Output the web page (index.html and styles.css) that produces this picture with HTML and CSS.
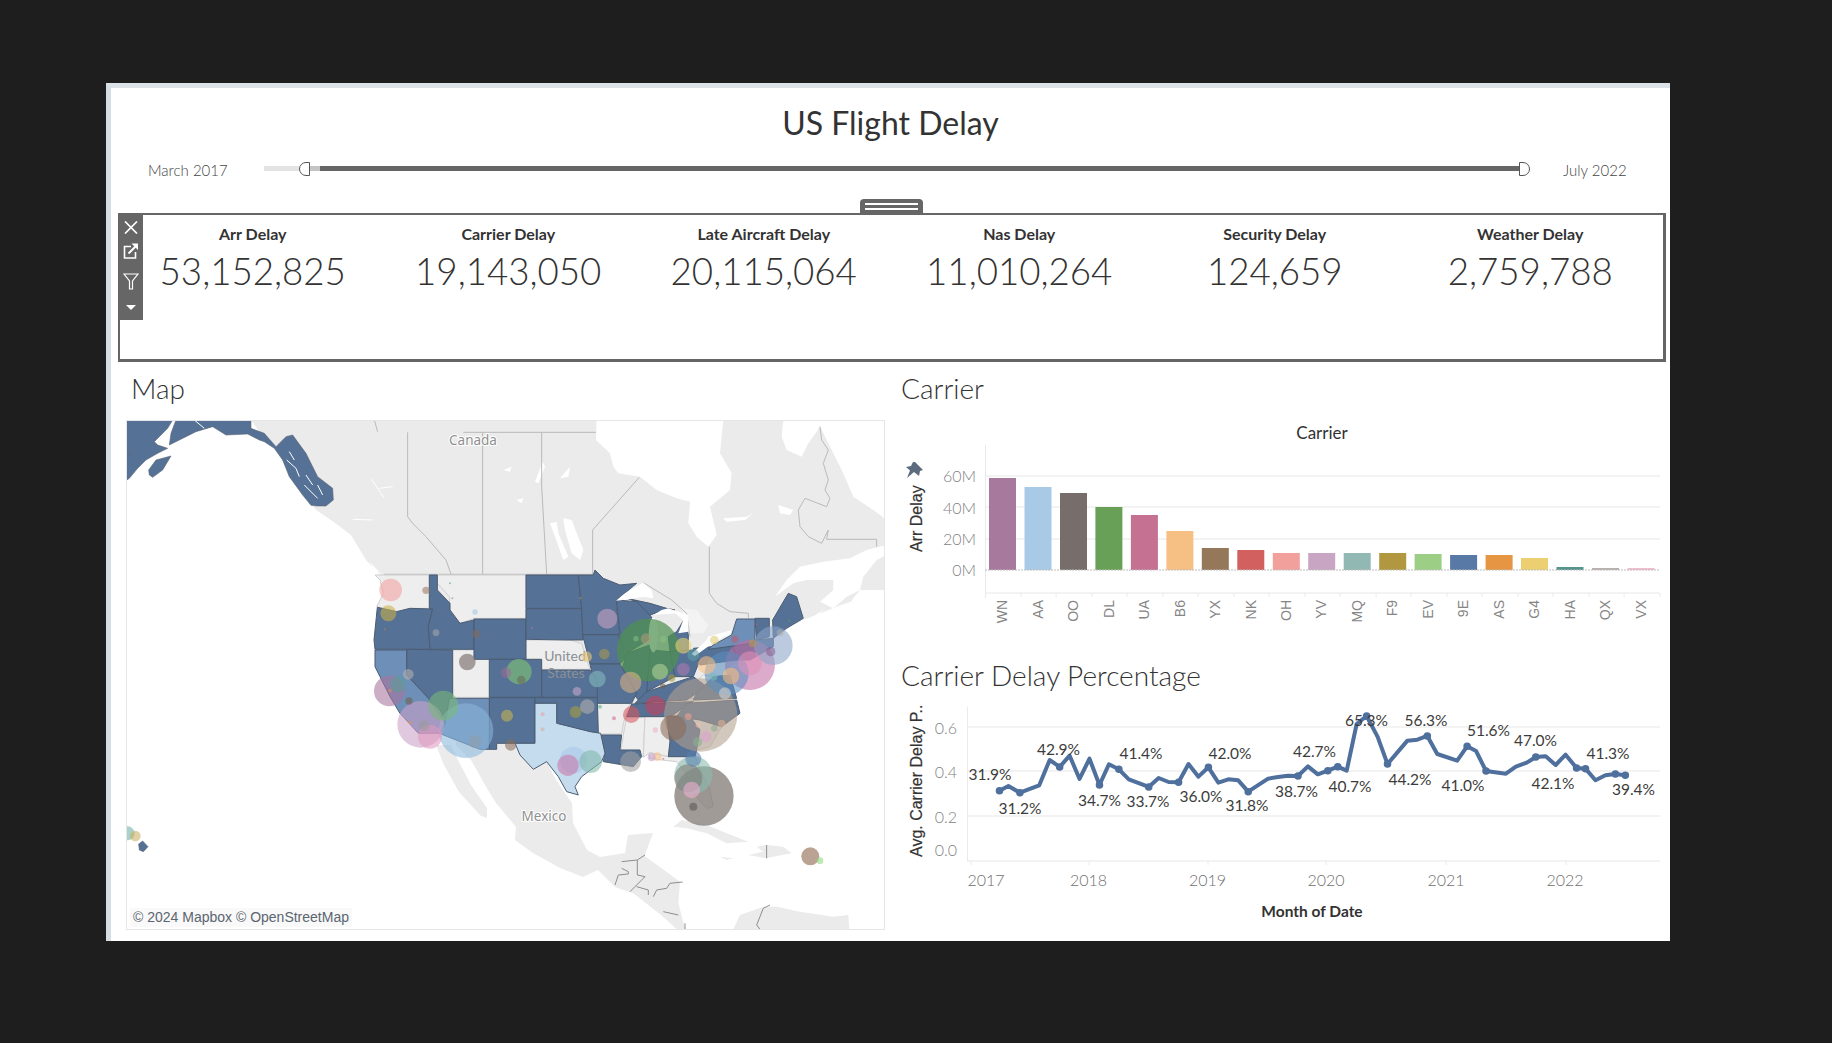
FILE: index.html
```html
<!DOCTYPE html>
<html lang="en">
<head>
<meta charset="utf-8">
<title>US Flight Delay</title>
<link rel="stylesheet" href="styles.css">
</head>
<body>
<main class="dash">
  <h1 class="title">US Flight Delay</h1>
  <div class="range">
    <span class="range-label">March 2017</span>
    <div class="track">
      <span class="track-off"></span>
      <span class="handle handle-l"></span>
      <span class="track-fade"></span>
      <span class="track-on"></span>
      <span class="handle handle-r"></span>
    </div>
    <span class="range-end">July 2022</span>
  </div>

  <section class="kpi-box">
    <div class="grip"><i></i><i></i></div>
    <div class="tools">
      <svg class="tool" width="14" height="13" viewBox="0 0 14 13"><path d="M1 .5 13 12.500M13 .5 1 12.500" fill="none" stroke="#fff" stroke-width="1.700"/></svg>
      <svg class="tool" width="16" height="16" viewBox="0 0 16 16"><path d="M8 3.500H1.500V15H12.500V9" fill="none" stroke="#fff" stroke-width="1.600"/><path d="M5.500 10.500 13 3" fill="none" stroke="#fff" stroke-width="2"/><path d="M8.500 .5H15V7Z" fill="#fff"/></svg>
      <svg class="tool" width="16" height="17" viewBox="0 0 16 17"><path d="M1 1H15L9.500 8V16H6.500V8Z" fill="none" stroke="#fff" stroke-width="1.200"/></svg>
      <svg class="tool" width="10" height="5" viewBox="0 0 10 5"><path d="M0 0H10L5 5Z" fill="#fff"/></svg>
    </div>
    <div class="kpis">
      <div class="kpi"><h3>Arr Delay</h3><p>53,152,825</p></div>
      <div class="kpi"><h3>Carrier Delay</h3><p>19,143,050</p></div>
      <div class="kpi"><h3>Late Aircraft Delay</h3><p>20,115,064</p></div>
      <div class="kpi"><h3>Nas Delay</h3><p>11,010,264</p></div>
      <div class="kpi"><h3>Security Delay</h3><p>124,659</p></div>
      <div class="kpi"><h3>Weather Delay</h3><p>2,759,788</p></div>
    </div>
  </section>

  <div class="panels">
    <section class="left">
      <h2 class="h-map">Map</h2>
      <div class="map">
        <svg class="map-svg" width="757" height="508" viewBox="1 1 757 508">
          <g class="base">
            <path class="land" d="M125 0H760V170L715 185L690 195L660 208L600 250L560 300L500 315L330 300L258 160L254 155L240 140L225 115L205 100L190 90L170 62L150 30L135 14Z"/>
            <path class="land" d="M330 325 345 340 362 370 370 383 390 407 389 420 407 433 434 448 457 457 472 450 489 467 507 473 524 483 537 497 559 509 552 483 551 467 554 462 521 456 512 460 517 440 527 413 502 415 499 433 474 437 461 430 447 403 446 383 430 360 400 300 330 300Z"/>
            <path class="land" d="M310 325 318 345 333 372 355 396 361 398 361 388 345 365 332 340 325 325Z"/>
            <g transform="translate(374 370) scale(.3333)">
              <path class="land" d="M520 110 545 90 620 105 680 130 745 155 680 160 620 130 560 115ZM770 170 800 165 850 170 875 190 820 200 800 205 745 195 790 185ZM660 200 700 205 680 210ZM345 290 365 215 412 210 430 195 540 275 535 340 555 418 700 418 720 375 790 350 830 350 900 365 1000 380 1045 375 1048 418H530L490 380 400 310Z"/>
            </g>
            <g transform="translate(374 0) scale(.3333)">
              <path class="water" d="M290 0 288 60 330 100 340 140 355 160 420 170 470 210 530 235 570 245 565 310 590 350 625 380 650 345 630 260 690 210 695 160 660 100 670 0ZM850 0 845 50 860 90 905 110 925 70 950 35 960 18 985 70 1030 160 1060 230 1120 270 1153 295 1160 290V0Z"/>
              <path class="water" d="M1160 375 1100 390 1050 415 970 425 900 440 860 480 825 530 880 490 920 480 1000 480 1000 510 960 545 1000 565 1040 530 1080 510 1090 470 1130 420 1160 405ZM1160 510 1080 510 1060 535 1040 570 970 625 930 640 930 610 975 565 940 590 905 600 880 640 800 720H1160Z"/>
              <path class="water" d="M670 295 740 290 760 280 735 300 680 305ZM835 255 880 270 870 285 840 280ZM190 295 215 300 250 390 240 420 215 400 195 330ZM150 310 170 305 175 340 205 410 190 420 165 350ZM105 185 128 125 135 140 115 190ZM10 150 35 140 30 155ZM180 175 210 140 205 170ZM50 240 70 235 65 250Z"/>
              <path class="pale" d="M540 565 590 570 625 615 610 640 570 640 565 600Z"/>
            </g>
            <g transform="scale(.3333)">
              <path class="water" d="M550 280 575 280 600 350 570 320ZM730 425 770 465 745 450Z"/>
              <path class="water-thin" d="M735 175 775 235M760 205 800 200M680 298 740 300"/>
            </g>
          </g>
          <g transform="translate(374 370) scale(.3333)">
            <path class="border-d" d="M365 215 412 210 435 195M365 235 385 245 385 252 355 255 345 285M412 210V255L435 260 390 305M410 290 445 300V315M460 320 470 300 500 295 510 280 548 276M490 365 535 375M555 400V418M800 165V205M810 345 790 355 770 405 780 418"/>
          </g>
          <g transform="translate(374 0) scale(.3333)">
            <path class="border" d="M-110 37H288M125 37 125 200 140 462M278 462V330L418 172M628 380V520L650 550 690 575 745 580V595M960 20 965 60 985 90 970 130 985 180 975 210 990 235 980 260 915 235 895 270 900 320 925 350 965 370 985 330 980 358H1130V380M-348 463H280M430 488 515 540 560 580 570 650"/>
          </g>
          <g transform="scale(.3333)">
            <path class="border" d="M845 37V290L860 310 900 350 960 420 975 462M1070 37V462M745 0 755 35"/>
            <path class="alaska" d="M0 0H140L125 25 105 45 85 65 95 75 125 85 95 100 60 120 35 145 10 175 0 182V92L15 100 0 115ZM150 0H375V25L415 40 450 80 480 50 500 45 540 100 575 170 620 205 622 240 600 258 575 258 555 256 530 225 490 170 470 120 445 85 415 65 400 60 365 42 300 45 260 20 210 35 130 75 135 40ZM68 150 90 120 135 108 110 150 80 172 70 165Z"/>
            <path class="water-thin" d="M490 95 505 120M482 120 510 145 520 170M540 165 560 195M535 195 575 235M575 195 590 225M205 0 235 25"/>
          </g>
          <g class="usa" transform="translate(234 140) scale(.3333)">
            <g class="st st-off">
              <path d="M45 45H208V145H150L110 155 50 140 70 100 60 60Z"/>
              <path d="M232 45H498V175H342L300 190 270 150 268 110 232 70Z"/>
              <path d="M498 240H630L665 250 690 328H545V298H498Z"/>
              <path d="M278 270H342V298H388V412H278Z"/>
              <path d="M712 430H810L790 490 785 522H722L715 520Z"/>
              <path d="M800 472H855L850 590 790 580 783 572 790 525Z"/>
              <path d="M855 470H920L930 545 925 590 870 578 850 592Z"/>
              <path d="M868 578 925 590H1005L1050 690 1060 740 1040 745 1000 700 980 640 950 605 905 600 868 595Z"/>
              <path d="M960 470 1020 480 1085 500 1050 560 1010 570 960 490Z"/>
              <path d="M990 380 1030 345 1060 350 1050 390 1020 415 985 415Z"/>
              <path d="M1130 250 1180 240 1170 300 1130 300Z"/>
            </g>
            <g class="st">
              <path d="M52 142 110 155 150 145 218 147 205 200 210 268H45L42 240Z"/>
              <path d="M208 45H232V90L270 130V150L300 190 342 180V268H210L205 200 218 147 208 145Z"/>
              <path d="M342 177H498V298H342Z"/>
              <path d="M498 45H655L665 145H498Z"/>
              <path d="M498 146H665L670 240H625L498 238Z"/>
              <path d="M655 45H700L705 30 730 55 780 75 830 70 770 120 770 140 780 224H668L665 146Z"/>
              <path d="M668 224H775L800 290 780 312H690Z"/>
              <path d="M770 120 830 125 870 165 880 180 865 240 800 280 775 224 780 220Z"/>
              <path d="M800 115 870 130 920 145 945 150 900 155 870 165 830 125Z"/>
              <path d="M950 215 975 175 985 225 985 270 930 275 925 230Z"/>
              <path d="M800 280 870 255 880 340 860 400 835 420 780 350Z"/>
              <path d="M870 270 930 275 945 350 860 395Z"/>
              <path d="M930 275 1000 270 1020 300 1000 350 945 350Z"/>
              <path d="M860 395 1000 350 1040 380 980 420 825 430Z"/>
              <path d="M815 432 1000 425 930 470 800 470Z"/>
              <path d="M690 312H780L830 400 815 430H712V410Z"/>
              <path d="M545 330H690L712 360V412H545Z"/>
              <path d="M388 298H545V412H388Z"/>
              <path d="M140 268 278 270V412L268 415 255 490 205 415 140 345Z"/>
              <path d="M388 413H525V550H410V568H388Z"/>
              <path d="M525 413H712L715 520 690 515 590 490V430H525Z"/>
              <path d="M722 525H785L780 570 840 570 845 590 820 620 760 610 730 605 735 580Z"/>
              <path d="M920 470H990L1020 510 1010 570 1005 590H925L930 545Z"/>
              <path d="M980 430 1130 420 1140 460 1085 500 1020 480 950 470Z"/>
              <path d="M1000 420 1130 415 1110 345 1060 350 1010 400Z"/>
              <path d="M1000 265 1120 255 1130 300 1020 315Z"/>
              <path d="M1120 255 1185 240 1240 235 1240 260 1170 300 1130 300Z"/>
              <path d="M1238 180 1285 100 1310 110 1330 175 1280 205 1240 235Z"/>
              <path d="M1185 175H1228V230L1190 240Z"/>
            </g>
            <g class="st st-mid">
              <path d="M45 270H140V345L205 415 255 490 240 520H175L120 460 90 410 60 350 45 320Z"/>
              <path d="M268 415H388V568H360L250 525 240 520 255 490Z"/>
              <path d="M1045 268 1060 255 1115 225 1130 177H1185V240L1175 250 1120 258Z"/>
            </g>
            <path class="st-light" d="M525 430H590V490L690 515 722 520 735 580 725 605 665 650 645 680 655 705 620 695 595 650 560 605 520 628 480 585 465 550H525Z"/>
            <path class="water" d="M768 122 795 100 850 68 875 90 880 115 850 110 810 118ZM880 165 905 150 925 145 985 165 985 215 955 220 970 180 945 160ZM995 282 1040 240 1045 230 1115 210 1110 222 1060 248 1005 288Z"/>
            <ellipse cx="880" cy="225" rx="14" ry="52" class="water"/>
          </g>
          <text class="place" x="347" y="25">Canada</text>
          <text class="place" x="418" y="401">Mexico</text>
          <text class="place place-us" x="439" y="241">United</text>
          <text class="place place-us" x="440" y="258">States</text>
          <g transform="translate(234 140) scale(.3333)" class="bubbles">
            <circle cx="1022" cy="465" r="110" fill="#b3a08f"/>
            <circle cx="865" cy="270" r="94" fill="#4f9250" class="strong"/>
            <circle cx="1032" cy="708" r="89" fill="#7d7470" class="strong"/>
            <circle cx="318" cy="512" r="82" fill="#8ab6dc"/>
            <circle cx="1170" cy="315" r="75" fill="#c36da3"/>
            <circle cx="182" cy="493" r="70" fill="#c9a0c8"/>
            <circle cx="1100" cy="340" r="66" fill="#5b8fc0"/>
            <circle cx="1240" cy="257" r="58" fill="#8aa4c8"/>
            <circle cx="1000" cy="645" r="57" fill="#88bcae"/>
            <circle cx="88" cy="393" r="46" fill="#a9739e"/>
            <circle cx="250" cy="437" r="45" fill="#78ba78"/>
            <circle cx="985" cy="655" r="42" fill="#807a78"/>
            <circle cx="640" cy="600" r="40" fill="#a8c8e8"/>
            <circle cx="940" cy="503" r="39" fill="#8a6a5a"/>
            <circle cx="477" cy="335" r="38" fill="#78b878" class="strong"/>
            <circle cx="210" cy="530" r="36" fill="#e09ac0"/>
            <circle cx="1170" cy="310" r="36" fill="#e090b8"/>
            <circle cx="692" cy="605" r="34" fill="#80b8a8"/>
            <circle cx="92" cy="90" r="34" fill="#f2a09e"/>
            <circle cx="624" cy="616" r="32" fill="#c878a8"/>
            <circle cx="812" cy="367" r="32" fill="#dcb484"/>
            <circle cx="812" cy="605" r="31" fill="#a0a0a0"/>
            <circle cx="886" cy="437" r="30" fill="#c83f5c"/>
            <circle cx="742" cy="176" r="30" fill="#cba2c4"/>
            <circle cx="1040" cy="315" r="27" fill="#f6c085"/>
            <circle cx="322" cy="306" r="25" fill="#857c78" class="strong"/>
            <circle cx="995" cy="690" r="25" fill="#f0b0d0"/>
            <circle cx="814" cy="464" r="25" fill="#d85a60"/>
            <circle cx="1113" cy="348" r="25" fill="#f6bc78"/>
            <circle cx="712" cy="357" r="25" fill="#84bcc0"/>
            <circle cx="85" cy="160" r="24" fill="#c9b04a"/>
            <circle cx="900" cy="335" r="24" fill="#b4d498"/>
            <circle cx="970" cy="257" r="24" fill="#eed670"/>
            <circle cx="1000" cy="596" r="24" fill="#5880b0"/>
            <circle cx="114" cy="373" r="24" fill="#5b9c94"/>
            <circle cx="682" cy="440" r="22" fill="#b5b0b0"/>
            <circle cx="345" cy="545" r="20" fill="#8f9cab"/>
            <circle cx="970" cy="328" r="19" fill="#b27ab0"/>
            <circle cx="441" cy="467" r="18" fill="#c9b555"/>
            <circle cx="647" cy="456" r="18" fill="#a89f40"/>
            <circle cx="1000" cy="285" r="18" fill="#5fa0a8"/>
            <circle cx="1095" cy="400" r="18" fill="#d4d4d4"/>
            <circle cx="1038" cy="530" r="17" fill="#dba2cc"/>
            <circle cx="452" cy="555" r="17" fill="#8a6f5c"/>
            <circle cx="680" cy="290" r="16" fill="#eeca7a"/>
            <circle cx="733" cy="282" r="16" fill="#a89a50"/>
            <circle cx="858" cy="236" r="16" fill="#a99a78"/>
            <circle cx="438" cy="338" r="16" fill="#9a6a9a"/>
            <circle cx="192" cy="497" r="16" fill="#9b9b9b"/>
            <circle cx="145" cy="343" r="16" fill="#b5b0b0"/>
            <circle cx="1232" cy="275" r="14" fill="#8a6090"/>
            <circle cx="1013" cy="546" r="14" fill="#8ab090"/>
            <circle cx="484" cy="360" r="13" fill="#6a6a5a"/>
            <circle cx="1063" cy="240" r="13" fill="#dccb70"/>
            <circle cx="349" cy="222" r="13" fill="#7d6a60"/>
            <circle cx="651" cy="394" r="13" fill="#c8a8cc"/>
            <circle cx="892" cy="590" r="13" fill="#f6c085"/>
            <circle cx="875" cy="592" r="12" fill="#c8a0d0"/>
            <circle cx="1125" cy="238" r="11" fill="#c05a70"/>
            <circle cx="1000" cy="740" r="12" fill="#5c5456"/>
            <circle cx="1178" cy="250" r="12" fill="#b09a50"/>
            <circle cx="1060" cy="350" r="12" fill="#7abbbb"/>
            <circle cx="935" cy="354" r="11" fill="#a09a40"/>
            <circle cx="198" cy="91" r="11" fill="#9c7a63"/>
            <circle cx="1085" cy="490" r="11" fill="#e0b090"/>
            <circle cx="147" cy="423" r="11" fill="#706050"/>
            <circle cx="910" cy="238" r="10" fill="#88c080"/>
            <circle cx="828" cy="236" r="8" fill="#84bc84"/>
            <circle cx="228" cy="218" r="10" fill="#a5a5ad"/>
            <circle cx="985" cy="470" r="10" fill="#f0a090"/>
            <circle cx="1063" cy="505" r="10" fill="#90a890"/>
            <circle cx="1260" cy="218" r="10" fill="#aaaaaa"/>
            <circle cx="345" cy="156" r="8" fill="#a3c6e8"/>
            <circle cx="908" cy="378" r="8" fill="#706050"/>
            <circle cx="1015" cy="495" r="8" fill="#e8c0a8"/>
            <circle cx="886" cy="510" r="8" fill="#f0b0c8"/>
            <circle cx="762" cy="475" r="6" fill="#d06a90"/>
            <circle cx="720" cy="440" r="6" fill="#60a890"/>
            <circle cx="548" cy="463" r="6" fill="#e8a0a0"/>
            <circle cx="548" cy="508" r="6" fill="#d8b0a0"/>
            <circle cx="90" cy="392" r="5" fill="#e69542"/>
            <circle cx="150" cy="487" r="5" fill="#e69542"/>
            <circle cx="270" cy="70" r="3" fill="#55948d"/>
            <circle cx="277" cy="115" r="3" fill="#a87c60"/>
            <circle cx="662" cy="115" r="3" fill="#c0a030"/>
            <circle cx="517" cy="203" r="3" fill="#c878a8"/>
            <circle cx="75" cy="208" r="3" fill="#c08050"/>
            <circle cx="910" cy="596" r="3" fill="#d06090"/>
            <circle cx="1189" cy="193" r="3" fill="#d1605e"/>
            <circle cx="1288" cy="182" r="3" fill="#69a057"/>
          </g>
          <g transform="translate(0 370) scale(.3333)">
            <path class="alaska" d="M38 162 50 153 66 170 52 185 40 180Z"/>
            <g class="bubbles">
              <circle cx="5" cy="130" r="21" fill="#70b0a8"/>
              <circle cx="28" cy="138" r="16" fill="#c8b060"/>
            </g>
          </g>
          <g transform="translate(374 370) scale(.3333)" class="bubbles">
            <circle cx="931" cy="199" r="27" fill="#a08068" class="strong"/>
            <circle cx="960" cy="212" r="10" fill="#90d880"/>
          </g>
        </svg>
        <div class="attrib">© 2024 Mapbox © OpenStreetMap</div>
      </div>
    </section>

    <section class="right">
      <h2 class="h-carrier">Carrier</h2>
      <svg class="chart" width="780" height="230" viewBox="0 0 780 230">
        <text class="t-head" x="432" y="19">Carrier</text>
        <path class="grid" d="M95 56H770M95 87H770M95 119H770M95 173H770"/>
        <path class="axis" d="M95.500 25V178M131 173v4M166 173v4M202 173v4M237 173v4M273 173v4M308 173v4M344 173v4M379 173v4M415 173v4M450 173v4M486 173v4M521 173v4M557 173v4M592 173v4M628 173v4M663 173v4M699 173v4M734 173v4M770 173v4"/>
        <path class="pin" d="M25 42 33 50 30 51 29 56 24 52 17 58 20 50.500 16 47 21 46 23 42Z"/>
        <text class="t-axis" transform="translate(32 132) rotate(-90)">Arr Delay</text>
        <g class="t-tick">
          <text x="86" y="62">60M</text><text x="86" y="94">40M</text><text x="86" y="125">20M</text><text x="86" y="156">0M</text>
        </g>
        <rect x="99" y="58" width="27" height="92" fill="#a7799d"/>
        <rect x="134.500" y="67" width="27" height="83" fill="#a8cae6"/>
        <rect x="170" y="73" width="27" height="77" fill="#776e6b"/>
        <rect x="205.400" y="87" width="27" height="63" fill="#69a057"/>
        <rect x="240.900" y="95" width="27" height="55" fill="#c57192"/>
        <rect x="276.400" y="111" width="27" height="39" fill="#f6c085"/>
        <rect x="311.800" y="128" width="27" height="22" fill="#957759"/>
        <rect x="347.300" y="130" width="27" height="20" fill="#d1605e"/>
        <rect x="382.800" y="133" width="27" height="17" fill="#f1a09c"/>
        <rect x="418.200" y="133" width="27" height="17" fill="#c9a5c4"/>
        <rect x="453.700" y="133" width="27" height="17" fill="#92b8b4"/>
        <rect x="489.200" y="133" width="27" height="17" fill="#b19840"/>
        <rect x="524.600" y="134" width="27" height="16" fill="#9ccf85"/>
        <rect x="560.100" y="135" width="27" height="15" fill="#5878a5"/>
        <rect x="595.600" y="135" width="27" height="15" fill="#e69542"/>
        <rect x="631" y="138" width="27" height="12" fill="#ebcf70"/>
        <rect x="666.500" y="147" width="27" height="3" fill="#55948d"/>
        <rect x="702" y="148" width="27" height="2" fill="#b8b0ac"/>
        <rect x="737.500" y="148" width="27" height="2" fill="#f0bcd0"/>
        <path class="zero" d="M95 150H770"/>
        <g class="t-cat">
          <text transform="translate(117 180) rotate(-90)">WN</text>
          <text transform="translate(153 180) rotate(-90)">AA</text>
          <text transform="translate(188 180) rotate(-90)">OO</text>
          <text transform="translate(224 180) rotate(-90)">DL</text>
          <text transform="translate(259 180) rotate(-90)">UA</text>
          <text transform="translate(295 180) rotate(-90)">B6</text>
          <text transform="translate(330 180) rotate(-90)">YX</text>
          <text transform="translate(366 180) rotate(-90)">NK</text>
          <text transform="translate(401 180) rotate(-90)">OH</text>
          <text transform="translate(436 180) rotate(-90)">YV</text>
          <text transform="translate(472 180) rotate(-90)">MQ</text>
          <text transform="translate(507 180) rotate(-90)">F9</text>
          <text transform="translate(543 180) rotate(-90)">EV</text>
          <text transform="translate(578 180) rotate(-90)">9E</text>
          <text transform="translate(614 180) rotate(-90)">AS</text>
          <text transform="translate(649 180) rotate(-90)">G4</text>
          <text transform="translate(685 180) rotate(-90)">HA</text>
          <text transform="translate(720 180) rotate(-90)">QX</text>
          <text transform="translate(756 180) rotate(-90)">VX</text>
        </g>
      </svg>

      <h2 class="h-carrier h-second">Carrier Delay Percentage</h2>
      <svg class="chart" width="780" height="231" viewBox="0 0 780 231">
        <path class="grid" d="M77 23H770M77 67H770M77 112H770M77 157H770"/>
        <path class="axis" d="M77.500 3V157M81 157v4M199 157v4M318 157v4M436 157v4M556 157v4M676 157v4"/>
        <text class="t-axis" transform="translate(32 153) rotate(-90)">Avg. Carrier Delay P..</text>
        <g class="t-tick">
          <text x="67" y="30">0.6</text><text x="67" y="74">0.4</text><text x="67" y="119">0.2</text><text x="67" y="152">0.0</text>
        </g>
        <g class="t-year">
          <text x="96" y="182">2017</text><text x="198.500" y="182">2018</text><text x="317.500" y="182">2019</text><text x="436" y="182">2020</text><text x="556" y="182">2021</text><text x="675" y="182">2022</text>
        </g>
        <text class="t-foot" x="422" y="213">Month of Date</text>
        <g transform="translate(0 -54) scale(.4975 .3333)">
          <polyline class="line" points="220,422 238,408 261,428 300,406 321,330 341,351 361,317 381,387 401,326 421,405 440,343 460,358 480,388 520,411 540,384 560,396 580,397 600,342 620,380 640,352 660,398 680,388 700,391 720,425 760,386 780,381 800,377 820,378 840,349 860,373 880,362 900,350 918,362 938,222 958,198 980,260 1000,342 1040,272 1060,269 1080,258 1100,312 1140,332 1160,289 1178,303 1198,363 1238,371 1258,350 1280,338 1298,321 1318,319 1338,345 1358,314 1380,354 1398,356 1418,391 1438,376 1458,372 1478,376"/>
          <path class="dots" d="M220 422h.1M261 428h.1M341 351h.1M421 405h.1M460 358h.1M520 411h.1M580 397h.1M640 352h.1M720 425h.1M820 378h.1M880 362h.1M900 350h.1M958 198h.1M1000 342h.1M1080 258h.1M1160 289h.1M1198 363h.1M1298 321h.1M1380 354h.1M1398 356h.1M1458 372h.1M1478 376h.1"/>
        </g>
        <g class="t-val">
          <text x="100" y="76">31.9%</text><text x="130" y="110">31.2%</text><text x="168.500" y="51">42.9%</text>
          <text x="209.500" y="102">34.7%</text><text x="251" y="55">41.4%</text><text x="258" y="103">33.7%</text>
          <text x="311" y="98">36.0%</text><text x="340" y="55">42.0%</text><text x="357" y="107">31.8%</text>
          <text x="406.500" y="93">38.7%</text><text x="424.500" y="53">42.7%</text><text x="460" y="88">40.7%</text>
          <text x="476.500" y="22">65.3%</text><text x="536" y="22">56.3%</text><text x="520" y="81">44.2%</text>
          <text x="573" y="87">41.0%</text><text x="598.500" y="32">51.6%</text><text x="645.500" y="42">47.0%</text>
          <text x="663" y="85">42.1%</text><text x="718" y="55">41.3%</text><text x="743.500" y="91">39.4%</text>
        </g>
      </svg>
    </section>
  </div>
</main>
</body>
</html>
```
FILE: styles.css
```css
* { box-sizing: border-box; }
html, body { margin: 0; padding: 0; }
body {
  background: #1e1e1e;
  font-family: "Lato", "Liberation Sans", sans-serif;
  color: #333;
  min-height: 1043px;
  overflow: hidden;
}
.dash {
  margin: 83px 0 0 106px;
  width: 1564px;
  height: 858px;
  background: #fff;
  border-left: 5px solid #d5dee4;
  border-top: 5px solid #dbe3e9;
}
.title {
  margin: 0;
  height: 72px;
  line-height: 70px;
  text-align: center;
  font-size: 32px;
  font-weight: 400;
  color: #333;
}
.range {
  display: flex;
  align-items: center;
  height: 20px;
  padding: 0 45px 0 37px;
  font-size: 15px;
  font-weight: 300;
  color: #444;
}
.range-label { width: 116px; margin-top: -1px; }
.range-end { margin-left: 33px; width: 62px; white-space: nowrap; margin-top: -1px; }
.track {
  flex: 1;
  display: flex;
  align-items: center;
  height: 14px;
  margin-top: -3px;
}
.track-off { width: 35px; height: 5px; background: #e3e3e3; }
.track-fade { width: 10px; height: 5px; background: #c4c4c4; }
.track-on { flex: 1; height: 5px; background: #666; }
.handle { width: 11px; height: 14px; background: #fff; border: 1px solid #555; }
.handle-l { border-radius: 7px 0 0 7px; }
.handle-r { border-radius: 0 7px 7px 0; }

.kpi-box {
  position: relative;
  width: 1548px;
  height: 149px;
  margin: 33px 0 0 7px;
  border: 2px solid #666;
  border-bottom-width: 3px;
  border-right-width: 3px;
  padding: 0 5px 0 5px;
}
.grip {
  position: absolute;
  top: -16px;
  left: 740px;
  width: 63px;
  height: 15px;
  background: #666;
  border-radius: 4px 4px 0 0;
  padding-top: 4px;
  padding-left: 5px;
}
.grip i {
  display: block;
  width: 53px;
  height: 2px;
  margin-bottom: 3px;
  background: #fff;
}
.tools {
  position: absolute;
  top: -2px;
  left: -2px;
  width: 25px;
  height: 107px;
  background: #666;
  display: flex;
  flex-direction: column;
  align-items: center;
  padding-top: 8px;
}
.tool { display: block; flex: none; margin-bottom: 9px; }
.tool:nth-child(2) { margin-bottom: 14px; }
.tool:nth-child(3) { margin-bottom: 15px; }
.kpis { display: grid; grid-template-columns: repeat(6, 255.5px); padding-top: 9px; }
.kpi { text-align: center; }
.kpi h3 {
  margin: 0;
  font-size: 16px;
  line-height: 20px;
  font-weight: 700;
  color: #333;
}
.kpi p {
  margin: 5px 0 0;
  font-size: 36.700px;
  line-height: 44px;
  font-weight: 300;
  color: #333;
}

.panels {
  display: grid;
  grid-template-columns: 759px 780px;
  column-gap: 5px;
  padding-left: 15px;
}
h2 {
  margin: 0;
  font-size: 28px;
  font-weight: 300;
  line-height: 52px;
  color: #333;
}
.h-map { height: 58px; padding-left: 5px; }
.h-carrier { height: 58px; padding-left: 11px; }
.h-second { height: 54px; line-height: 50px; }
.chart { display: block; }
.map {
  position: relative;
  width: 759px;
  height: 510px;
  border: 1px solid #e6e6e6;
  overflow: hidden;
}
.map-svg { display: block; }
.attrib {
  position: absolute;
  left: 3px;
  bottom: 2px;
  padding: 0 3px;
  font: 14px/19px "Liberation Sans", sans-serif;
  color: #5b6570;
  background: rgba(248,248,248,.8);
}
.base { filter: blur(.6px); }
.usa { filter: blur(.25px); }
.land { fill: #ebebeb; }
.water { fill: #fff; }
.pale { fill: #f3f3f3; }
.water-thin { fill: none; stroke: #fff; stroke-width: 1; vector-effect: non-scaling-stroke; }
.border { fill: none; stroke: #bababa; stroke-width: 1; vector-effect: non-scaling-stroke; }
.border-d { fill: none; stroke: #8d8d8d; stroke-width: 1; vector-effect: non-scaling-stroke; }
.alaska { fill: #557195; stroke: #5c6673; stroke-width: .6; vector-effect: non-scaling-stroke; }
.st path { fill: #557195; stroke: #4b5c72; stroke-width: 1; vector-effect: non-scaling-stroke; }
.st-off path { fill: #eeeeee; stroke: #cfcfcf; }
.st-mid path { fill: #6e8fb8; }
.st-light { fill: #c5dcee; stroke: #4b5c72; stroke-width: 1; vector-effect: non-scaling-stroke; }
.bubbles circle { fill-opacity: .58; }
.bubbles circle.strong { fill-opacity: .72; }
.place {
  font: 13.500px "Noto Sans", sans-serif;
  text-anchor: middle;
  fill: #8f8f8f;
  stroke: #fff;
  stroke-width: 2px;
  paint-order: stroke;
}
.place-us { fill: #8b8f96; stroke: none; font: 14px "Lato", sans-serif; }

.grid { fill: none; stroke: #f0f0f0; stroke-width: 1.500; }
.axis { fill: none; stroke: #eaeaea; stroke-width: 1; }
.zero { fill: none; stroke: #bdbdbd; stroke-width: 1; stroke-dasharray: 2 1; }
.pin { fill: #5d6b7e; }
.t-head { font-size: 17px; text-anchor: middle; fill: #333; }
.t-axis { font: 16px "Liberation Sans", sans-serif; fill: #333; stroke: #333; stroke-width: .2px; }
.t-tick text { font-size: 16px; font-weight: 300; text-anchor: end; fill: #7f7f7f; }
.t-cat text { font: 14px "Liberation Sans", sans-serif; text-anchor: end; fill: #858585; }
.t-year text { font-size: 16px; font-weight: 300; text-anchor: middle; fill: #6f6f6f; }
.t-foot { font-size: 15.500px; font-weight: 700; text-anchor: middle; fill: #333; }
.t-val text { font-size: 15.500px; text-anchor: middle; fill: #3c3c3c; }
.line { fill: none; stroke: #4f6f9d; stroke-width: 4; stroke-linejoin: round; vector-effect: non-scaling-stroke; }
.dots { fill: none; stroke: #4f6f9d; stroke-width: 7.500; stroke-linecap: round; vector-effect: non-scaling-stroke; }
```
